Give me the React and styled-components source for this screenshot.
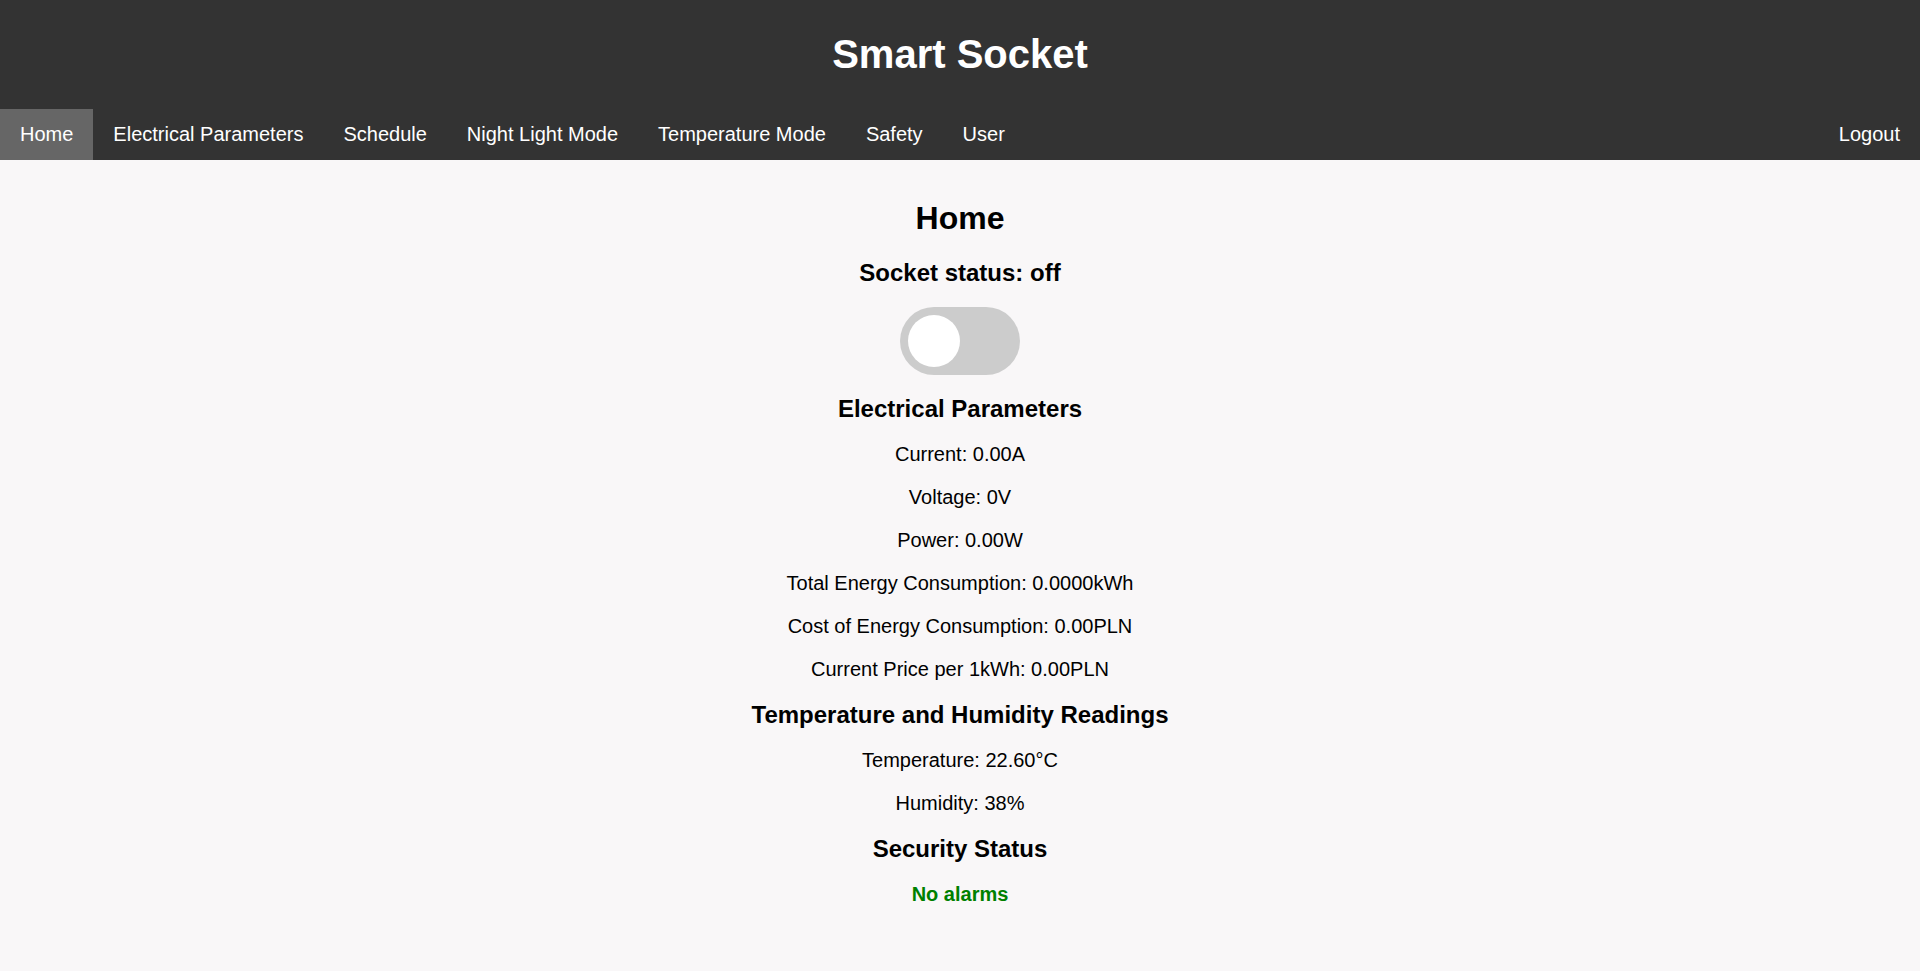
import React, { useState } from 'react'
import styled, { createGlobalStyle } from 'styled-components'

const GlobalStyle = createGlobalStyle`
  html, body {
    margin: 0;
    padding: 0;
    background: #f9f7f8;
    font-family: "Liberation Sans", Arial, sans-serif;
  }
`

const Header = styled.header`
  background-color: #333;
  color: #fff;
  text-align: center;
  padding: 31px 0 32px;
`

const Title = styled.h1`
  margin: 0;
  font-size: 40px;
  line-height: 46px;
  font-weight: bold;
`

const Nav = styled.nav`
  background-color: #333;
  display: flex;
`

const NavLink = styled.a`
  display: block;
  color: #fff;
  text-decoration: none;
  font-size: 20px;
  line-height: 23px;
  padding: 14px 20px;
  background-color: ${props => (props.$active ? '#666' : 'transparent')};
  margin-left: ${props => (props.$right ? 'auto' : '0')};
  cursor: pointer;

  &:hover {
    background-color: ${props => (props.$active ? '#666' : '#444')};
  }
`

const Main = styled.main`
  padding-top: 19px;
  text-align: center;
  color: #000;
  display: flow-root;
`

const PageTitle = styled.h1`
  font-size: 32px;
  margin: 21.44px 0;
`

const SectionTitle = styled.h2`
  font-size: 24px;
  margin: 20px 0;
`

const Value = styled.p`
  font-size: 20px;
  margin: 20px 0;
  color: ${props => props.$color || '#000'};
  font-weight: ${props => (props.$bold ? 'bold' : 'normal')};
`

const Switch = styled.label`
  display: block;
  position: relative;
  width: 120px;
  height: 68px;
  margin: 0 auto;
  border-radius: 34px;
  background-color: ${props => (props.$on ? '#2196f3' : '#ccc')};
  cursor: pointer;
  transition: background-color 0.3s;
`

const Knob = styled.span`
  position: absolute;
  top: 8px;
  left: ${props => (props.$on ? '60px' : '8px')};
  width: 52px;
  height: 52px;
  border-radius: 50%;
  background-color: #fff;
  transition: left 0.3s;
`

const menu = [
  'Home',
  'Electrical Parameters',
  'Schedule',
  'Night Light Mode',
  'Temperature Mode',
  'Safety',
  'User',
]

const App = () => {
  const [on, setOn] = useState(false)

  return (
    <>
      <GlobalStyle />
      <Header>
        <Title>Smart Socket</Title>
      </Header>
      <Nav>
        {menu.map(item => (
          <NavLink key={item} $active={item === 'Home'}>{item}</NavLink>
        ))}
        <NavLink $right>Logout</NavLink>
      </Nav>
      <Main>
        <PageTitle>Home</PageTitle>
        <SectionTitle>Socket status: {on ? 'on' : 'off'}</SectionTitle>
        <Switch $on={on} onClick={() => setOn(!on)}>
          <Knob $on={on} />
        </Switch>

        <SectionTitle>Electrical Parameters</SectionTitle>
        <Value>Current: 0.00A</Value>
        <Value>Voltage: 0V</Value>
        <Value>Power: 0.00W</Value>
        <Value>Total Energy Consumption: 0.0000kWh</Value>
        <Value>Cost of Energy Consumption: 0.00PLN</Value>
        <Value>Current Price per 1kWh: 0.00PLN</Value>

        <SectionTitle>Temperature and Humidity Readings</SectionTitle>
        <Value>Temperature: 22.60°C</Value>
        <Value>Humidity: 38%</Value>

        <SectionTitle>Security Status</SectionTitle>
        <Value $bold $color="green">No alarms</Value>
      </Main>
    </>
  )
}

export default App
